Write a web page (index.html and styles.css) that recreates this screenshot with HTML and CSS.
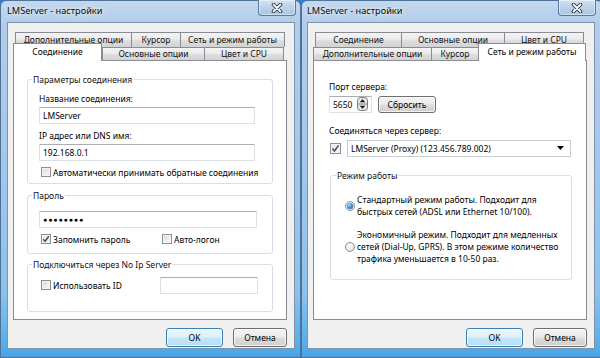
FILE: index.html
```html
<!DOCTYPE html>
<html lang="ru">
<head>
    <meta charset="UTF-8">
    <title>LMServer - настройки</title>
    <link rel="stylesheet" href="styles.css">
</head>
<body>
<div class="desktop">

    <!-- Окно 1: вкладка "Соединение" -->
    <div class="window window-left">
        <div class="titlebar">
            <span class="title">LMServer - настройки</span>
            <span class="close-btn">
                <svg width="14" height="10" viewBox="0 0 14 10">
                    <path d="M3.5 1.5 L10.5 8.5 M10.5 1.5 L3.5 8.5" stroke="#1d3149" stroke-width="3.6" stroke-linecap="round"/>
                    <path d="M3.5 1.5 L10.5 8.5 M10.5 1.5 L3.5 8.5" stroke="#ffffff" stroke-width="1.8" stroke-linecap="round"/>
                </svg>
            </span>
        </div>
        <div class="client">
            <div class="tabs">
                <div class="tab-row tab-row-back cols-left-back">
                    <div class="tab">Дополнительные опции</div>
                    <div class="tab">Курсор</div>
                    <div class="tab tab-last">Сеть и режим работы</div>
                </div>
                <div class="tab-row tab-row-front cols-left-front">
                    <div class="tab tab-active">Соединение</div>
                    <div class="tab">Основные опции</div>
                    <div class="tab tab-last">Цвет и CPU</div>
                </div>
            </div>

            <div class="panel panel-connection">
                <div class="group group-params">
                    <div class="group-title">Параметры соединения</div>
                    <div class="field-label first-label">Название соединения:</div>
                    <div class="textbox">LMServer</div>
                    <div class="field-label">IP адрес или DNS имя:</div>
                    <div class="textbox">192.168.0.1</div>
                    <div class="check check-row">
                        <span class="checkbox"></span>Автоматически принимать обратные соединения
                    </div>
                </div>

                <div class="group group-password">
                    <div class="group-title">Пароль</div>
                    <div class="textbox textbox-password">●●●●●●●●</div>
                    <div class="check-pair">
                        <div class="check check-wide">
                            <span class="checkbox checked">
                                <svg width="8" height="8" viewBox="0 0 8 8"><path d="M1.2 4.2 L3.1 6.3 L6.8 1.3" fill="none" stroke="#3b4f7a" stroke-width="1.5"/></svg>
                            </span>Запомнить пароль
                        </div>
                        <div class="check">
                            <span class="checkbox"></span>Авто-логон
                        </div>
                    </div>
                </div>

                <div class="group group-noip">
                    <div class="group-title">Подключиться через No Ip Server</div>
                    <div class="noip-row">
                        <div class="check check-wide">
                            <span class="checkbox"></span>Использовать ID
                        </div>
                        <div class="textbox textbox-id"></div>
                    </div>
                </div>
            </div>

            <div class="dialog-buttons">
                <button class="btn btn-ok">OK</button>
                <button class="btn btn-cancel">Отмена</button>
            </div>
        </div>
    </div>

    <!-- Окно 2: вкладка "Сеть и режим работы" -->
    <div class="window window-right">
        <div class="titlebar">
            <span class="title">LMServer - настройки</span>
            <span class="close-btn">
                <svg width="14" height="10" viewBox="0 0 14 10">
                    <path d="M3.5 1.5 L10.5 8.5 M10.5 1.5 L3.5 8.5" stroke="#1d3149" stroke-width="3.6" stroke-linecap="round"/>
                    <path d="M3.5 1.5 L10.5 8.5 M10.5 1.5 L3.5 8.5" stroke="#ffffff" stroke-width="1.8" stroke-linecap="round"/>
                </svg>
            </span>
        </div>
        <div class="client">
            <div class="tabs">
                <div class="tab-row tab-row-back cols-right-back">
                    <div class="tab">Соединение</div>
                    <div class="tab">Основные опции</div>
                    <div class="tab tab-last">Цвет и CPU</div>
                </div>
                <div class="tab-row tab-row-front cols-right-front">
                    <div class="tab">Дополнительные опции</div>
                    <div class="tab">Курсор</div>
                    <div class="tab tab-active">Сеть и режим работы</div>
                </div>
            </div>

            <div class="panel panel-network">
                <div class="field-label">Порт сервера:</div>
                <div class="port-row">
                    <div class="spinbox">
                        <span>5650</span>
                        <svg width="11" height="14" viewBox="0 0 11 14">
                            <rect x="0.5" y="0.5" width="10" height="13" rx="3" fill="#e4e4e4" stroke="#7b7b7b"/>
                            <line x1="1" y1="7" x2="10" y2="7" stroke="#8a8a8a"/>
                            <path d="M5.5 2.3 L8.2 5.2 H2.8 Z" fill="#111"/>
                            <path d="M5.5 11.7 L8.2 8.8 H2.8 Z" fill="#111"/>
                        </svg>
                    </div>
                    <button class="btn btn-reset">Сбросить</button>
                </div>

                <div class="field-label server-label">Соединяться через сервер:</div>
                <div class="server-row">
                    <span class="checkbox checkbox-lg checked">
                        <svg width="9" height="9" viewBox="0 0 9 9"><path d="M1.4 4.6 L3.5 7 L7.6 1.4" fill="none" stroke="#3b4f7a" stroke-width="1.5"/></svg>
                    </span>
                    <div class="combo">
                        <span>LMServer (Proxy) (123.456.789.002)</span>
                        <svg width="7" height="4" viewBox="0 0 7 4"><path d="M0 0 H7 L3.5 4 Z" fill="#000"/></svg>
                    </div>
                </div>

                <div class="group group-mode">
                    <div class="group-title">Режим работы</div>
                    <div class="option option-fast">
                        <span class="radio selected"></span>
                        <div class="option-text">Стандартный режим работы. Подходит для<br>быстрых сетей (ADSL или Ethernet 10/100).</div>
                    </div>
                    <div class="option option-slow">
                        <span class="radio"></span>
                        <div class="option-text">Экономичный режим. Подходит для медленных<br>сетей (Dial-Up, GPRS). В этом режиме количество<br>трафика уменьшается в 10-50 раз.</div>
                    </div>
                </div>
            </div>

            <div class="dialog-buttons">
                <button class="btn btn-ok">OK</button>
                <button class="btn btn-cancel">Отмена</button>
            </div>
        </div>
    </div>

</div>
</body>
</html>
```

FILE: styles.css
```css
* {
    margin: 0;
    padding: 0;
    box-sizing: border-box;
}

body {
    width: 600px;
    height: 358px;
    overflow: hidden;
    background: #2c7fc8;
    font-family: "Noto Sans", "Open Sans", sans-serif;
    font-size: 8.5px;
    color: #000;
}

.desktop {
    display: flex;
    height: 358px;
}

/* ---------- window frame (Aero glass) ---------- */

.window {
    flex: none;
    display: flex;
    flex-direction: column;
    padding-bottom: 8px;
    border: 1px solid #4f7398;
    border-radius: 6px 6px 0 0;
    background: linear-gradient(180deg, #c3d8ee 0, #b2cde9 22px, #a6c8ea 140px, #8ec2ea 290px, #56ade8 345px, #3f9fe4 360px);
}

.window-left {
    width: 301px;
    padding-left: 6px;
    padding-right: 5px;
}

.window-right {
    width: 302px;
    padding-left: 5px;
    padding-right: 7px;
}

.titlebar {
    height: 21px;
    display: flex;
    align-items: flex-start;
}

.title {
    line-height: 20px;
    font-size: 9.2px;
    color: #0d0d0d;
    text-shadow: 0 0 4px rgba(255, 255, 255, 0.9), 0 0 8px rgba(255, 255, 255, 0.7);
}

.close-btn {
    margin-left: auto;
    margin-top: -1px;
    margin-right: -1px;
    width: 38px;
    height: 16px;
    display: flex;
    align-items: center;
    justify-content: center;
    border: 1px solid #587a9e;
    border-top: none;
    border-radius: 0 0 4px 4px;
    background: linear-gradient(180deg, #d3e2f1 0, #bcd2e9 50%, #a9c5e3 100%);
    box-shadow: inset 0 0 0 1px rgba(255, 255, 255, 0.45);
}

/* ---------- dialog client area ---------- */

.client {
    height: 330px;
    border: 1px solid #7d92ab;
    background: #f0f0f0;
    padding: 9px 7px 0 5px;
}

.tabs {
    height: 28px;
}

.tab-row {
    display: grid;
}

.tab-row-back {
    margin-left: 2px;
    height: 15px;
}

.tab-row-front {
    height: 13px;
}

.cols-left-back { grid-template-columns: 116px 49px 105px; }
.cols-left-front { grid-template-columns: 89px 102px 80px; }
.cols-right-back { grid-template-columns: 86px 103px 80px; }
.cols-right-front { grid-template-columns: 118px 47px 108px; }

.tab {
    border: 1px solid #898c95;
    border-right: none;
    border-bottom: none;
    background: linear-gradient(180deg, #f4f4f4 0, #ebebeb 45%, #dddddd 55%, #d3d3d3 100%);
    text-align: center;
    white-space: nowrap;
    color: #111;
}

.tab-row-back .tab {
    line-height: 13px;
}

.tab-row-front .tab {
    line-height: 11px;
}

.tab-last {
    border-right: 1px solid #898c95;
}

.tab-row .tab-active {
    position: relative;
    z-index: 1;
    height: 18px;
    margin-top: -4px;
    margin-bottom: -1px;
    padding-top: 2px;
    border-right: 1px solid #898c95;
    background: #fff;
    color: #000;
}

.panel {
    height: 260px;
    background: #fff;
    border: 1px solid #898c95;
}

/* ---------- common controls ---------- */

.group {
    border: 1px solid #d5dfe5;
    border-radius: 3px;
    padding-left: 11px;
}

.group-title {
    display: table;
    margin: -7px 0 0 -7px;
    padding: 0 1px;
    background: #fff;
    line-height: 13px;
    color: #111;
}

.field-label {
    line-height: 13px;
    margin-top: 5px;
}

.first-label {
    margin-top: 6px;
}

.textbox {
    width: 216px;
    height: 17px;
    margin-top: 2px;
    padding-left: 3px;
    line-height: 15px;
    background: #fff;
    border: 1px solid #dde1e7;
    border-top-color: #abadb3;
    white-space: nowrap;
}

.check {
    display: flex;
    align-items: center;
    line-height: 13px;
    white-space: nowrap;
}

.checkbox {
    flex: none;
    width: 10px;
    height: 10px;
    margin-left: 2px;
    margin-right: 2px;
    display: flex;
    align-items: center;
    justify-content: center;
    border: 1px solid #8e8f8f;
    background: linear-gradient(135deg, #d2d4d8 0, #eeeeee 60%, #fbfbfb 100%);
    box-shadow: inset 0 0 0 1px #f3f3f3;
}

.checkbox.checked {
    background: linear-gradient(135deg, #e3e6ec 0, #f7f7f7 100%);
}

.checkbox-lg {
    width: 11px;
    height: 11px;
}

.btn {
    height: 19px;
    font-family: inherit;
    font-size: 8.5px;
    color: #000;
    border: 1px solid #707070;
    border-radius: 3px;
    background: linear-gradient(180deg, #f3f3f3 0, #ebebeb 48%, #dddddd 52%, #cfcfcf 100%);
    box-shadow: inset 0 0 0 1px rgba(255, 255, 255, 0.7);
}

.btn-ok {
    width: 57px;
    border-color: #3c7fb1;
    background: linear-gradient(180deg, #eaf6fd 0, #dcf0fb 48%, #c6e6f8 52%, #b3ddf4 100%);
}

.btn-cancel {
    width: 54px;
}

.dialog-buttons {
    display: flex;
    justify-content: flex-end;
    gap: 10px;
    margin-top: 8px;
}

/* ---------- "Соединение" tab ---------- */

.panel-connection {
    padding: 18px 13px 0;
}

.group-params .check-row {
    margin-top: 5px;
}

.group-params {
    padding-bottom: 4px;
}

.group-password {
    margin-top: 11px;
    padding-bottom: 7px;
}

.textbox-password {
    width: 218px;
    margin-top: 9px;
    font-size: 7px;
    letter-spacing: 0.9px;
    padding-left: 3px;
}

.check-pair {
    display: flex;
    margin-top: 5px;
}

.check-wide {
    width: 121px;
}

.group-noip {
    margin-top: 10px;
    padding-bottom: 17px;
}

.noip-row {
    display: flex;
    align-items: center;
    margin-top: 6px;
}

.textbox-id {
    width: 98px;
    margin-top: 0;
}

/* ---------- "Сеть и режим работы" tab ---------- */

.panel-network {
    padding: 14px 15px 0;
}

.port-row {
    display: flex;
    gap: 6px;
    margin-top: 3px;
}

.spinbox {
    width: 43px;
    height: 17px;
    display: flex;
    align-items: center;
    justify-content: space-between;
    padding: 0 3px 0 3px;
    background: #fff;
    border: 1px solid #dde1e7;
    border-top-color: #abadb3;
}

.btn-reset {
    width: 58px;
    height: 17px;
}

.server-label {
    margin-top: 11px;
}

.server-row {
    display: flex;
    align-items: center;
    margin-top: 3px;
}

.server-row .checkbox {
    margin-left: 1px;
    margin-right: 6px;
}

.combo {
    width: 224px;
    height: 17px;
    display: flex;
    align-items: center;
    justify-content: space-between;
    padding: 0 6px 0 3px;
    background: #fff;
    border: 1px solid #c9cdd3;
}

.group-mode {
    width: 242px;
    margin-top: 18px;
    margin-left: 1px;
    padding-left: 14px;
    padding-bottom: 14px;
}

.group-mode .group-title {
    margin-left: -9px;
}

.option {
    display: flex;
    align-items: center;
    gap: 2px;
}

.option-fast {
    margin-top: 12px;
}

.option-slow {
    margin-top: 11px;
}

.option-text {
    line-height: 12px;
    white-space: nowrap;
}

.radio {
    flex: none;
    position: relative;
    width: 10px;
    height: 10px;
    border-radius: 50%;
    border: 1px solid #8e8f8f;
    background: radial-gradient(circle at 40% 35%, #ffffff 0, #e6e6e6 60%, #cfcfcf 100%);
}

.radio.selected::after {
    content: "";
    position: absolute;
    left: 1px;
    top: 1px;
    width: 6px;
    height: 6px;
    border-radius: 50%;
    background: radial-gradient(circle at 40% 35%, #9fdcff 0, #3d8fd6 45%, #18508e 100%);
}
```
